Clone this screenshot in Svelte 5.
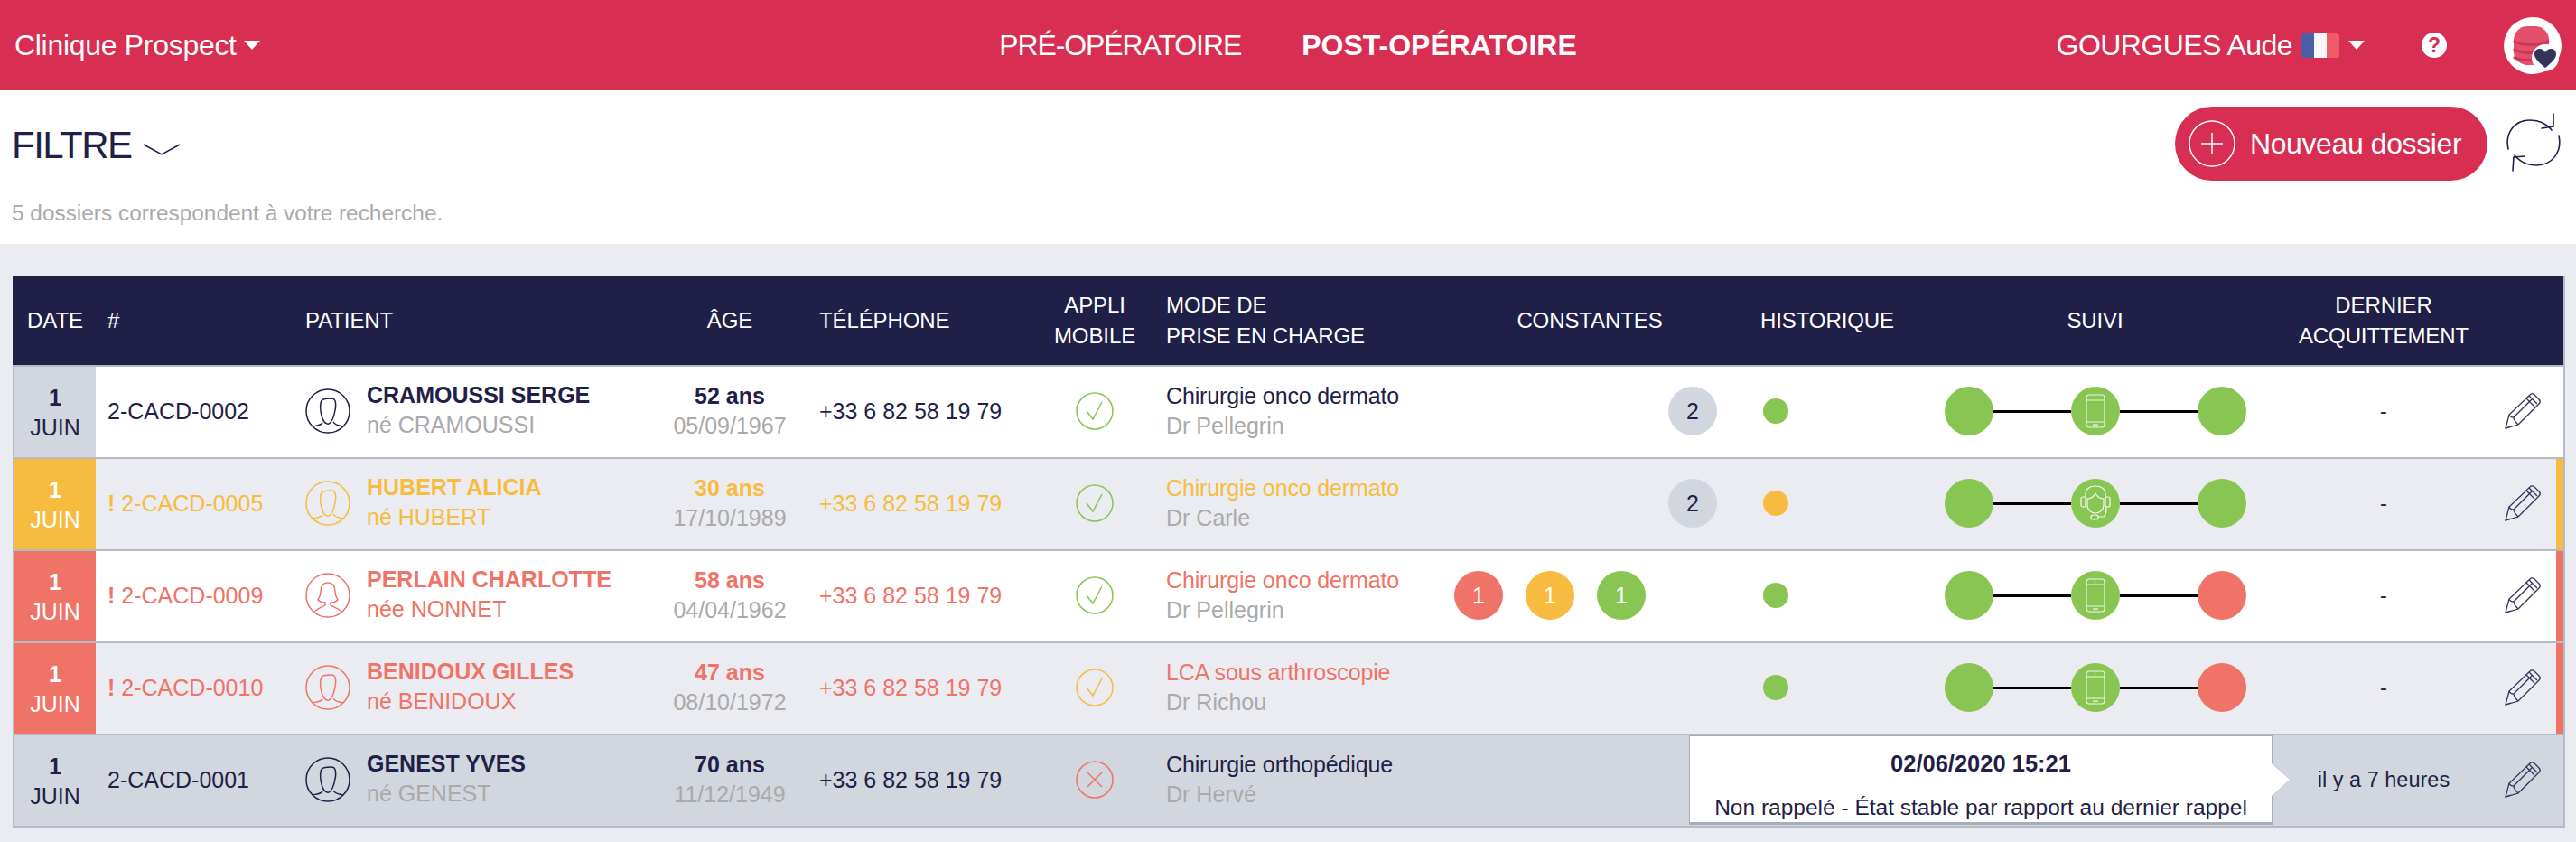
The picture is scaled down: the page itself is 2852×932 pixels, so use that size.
<script>
	const rows = [
		{ day: '1', num: '2-CACD-0002', name: 'CRAMOUSSI SERGE', birth: 'né CRAMOUSSI', age: '52 ans', date: '05/09/1967', mode: 'Chirurgie onco dermato', dr: 'Dr Pellegrin', tone: '', bg: 'white', hist: 'green', end: 'green', badges: [null, null, null, { n: 2, c: 'grey' }], app: 'ok', appTone: 'green', via: 'phone', ack: '-' },
		{ day: '1', num: '2-CACD-0005', name: 'HUBERT ALICIA', birth: 'né HUBERT', age: '30 ans', date: '17/10/1989', mode: 'Chirurgie onco dermato', dr: 'Dr Carle', tone: 'yellow', bg: 'soft', hist: 'yellow', end: 'green', badges: [null, null, null, { n: 2, c: 'grey' }], app: 'ok', appTone: 'green', via: 'headset', ack: '-' },
		{ day: '1', num: '2-CACD-0009', name: 'PERLAIN CHARLOTTE', birth: 'née NONNET', age: '58 ans', date: '04/04/1962', mode: 'Chirurgie onco dermato', dr: 'Dr Pellegrin', tone: 'red', bg: 'white', hist: 'green', end: 'red', badges: [{ n: 1, c: 'red' }, { n: 1, c: 'yellow' }, { n: 1, c: 'green' }], app: 'ok', appTone: 'green', via: 'phone', ack: '-', female: true },
		{ day: '1', num: '2-CACD-0010', name: 'BENIDOUX GILLES', birth: 'né BENIDOUX', age: '47 ans', date: '08/10/1972', mode: 'LCA sous arthroscopie', dr: 'Dr Richou', tone: 'red', bg: 'soft', hist: 'green', end: 'red', badges: [], app: 'ok', appTone: 'yellow', via: 'phone', ack: '-' },
		{ day: '1', num: '2-CACD-0001', name: 'GENEST YVES', birth: 'né GENEST', age: '70 ans', date: '11/12/1949', mode: 'Chirurgie orthopédique', dr: 'Dr Hervé', tone: '', bg: 'grey', hist: '', end: '', badges: [], app: 'ko', appTone: 'red', via: '', ack: 'il y a 7 heures', tip: true }
	];
</script>

<div class="page">
	<header class="topbar">
		<div class="clinic">Clinique Prospect <span class="caret"></span></div>
		<nav class="nav">
			<span class="off">PRÉ-OPÉRATOIRE</span>
			<span class="active">POST-OPÉRATOIRE</span>
		</nav>
		<div class="user">
			<span class="who">GOURGUES Aude</span>
			<span class="flag"><i></i><i></i><i></i></span>
			<span class="caret"></span>
			<span class="help">?</span>
			<span class="avatar">
				<svg width="64" height="63" viewBox="0 0 64 63">
					<ellipse cx="32" cy="31.500" rx="32" ry="31.500" fill="#fff" />
					<rect x="11" y="10" width="39" height="43" rx="15" fill="#e4506b" />
					<path d="M11 26c6 6 33 6 39 0M11 35c6 6 33 6 39 0M11 44c6 5 33 5 39 0" fill="none" stroke="#c9385a" stroke-width="3" />
					<circle cx="46" cy="45" r="15" fill="#fff" />
					<path d="M46 56C40 51 34 46 34 41c0-7 9-8 12-2 3-6 12-5 12 2 0 5-6 10-12 15z" fill="#33335d" />
				</svg>
			</span>
		</div>
	</header>

	<section class="toolbar">
		<div class="filter">
			<h1>FILTRE
				<svg width="42" height="13" viewBox="0 0 42 13"><path d="M1 1l20 11L41 1" fill="none" stroke="#1f1f47" stroke-width="1.5" /></svg>
			</h1>
			<p>5 dossiers correspondent à votre recherche.</p>
		</div>
		<div class="actions">
			<button class="add">
				<svg width="52" height="52" viewBox="0 0 52 52" fill="none" stroke="#fff" stroke-width="1.5"><circle cx="26" cy="26" r="25" /><path d="M26 14v24M14 26h24" /></svg>
				Nouveau dossier
			</button>
			<svg class="refresh" width="62" height="66" viewBox="0 0 62 66" fill="none" stroke="#1f1f47" stroke-width="1.600" stroke-linecap="round">
				<path d="M3 40C-1 22 10 8 27 8c9 0 18 3 24 11" />
				<path d="M53 1v14l-13 2" />
				<path d="M59 25c4 19-8 33-25 33-9 0-17-3-24-11" />
				<path d="M8 64l1-15 12-1" />
			</svg>
		</div>
	</section>

	<section class="table">
		<div class="grid head">
			<div class="c">DATE</div>
			<div class="pl">#</div>
			<div class="pt">PATIENT</div>
			<div class="c">ÂGE</div>
			<div class="ph">TÉLÉPHONE</div>
			<div class="c">APPLI<br />MOBILE</div>
			<div class="mo">MODE DE<br />PRISE EN CHARGE</div>
			<div class="c">CONSTANTES</div>
			<div class="c">HISTORIQUE</div>
			<div class="c">SUIVI</div>
			<div class="c">DERNIER<br />ACQUITTEMENT</div>
			<div></div>
		</div>

		{#each rows as r}
			<div class="grid row {r.bg} {r.tone}">
				<div class="date"><span>{r.day}</span><span>JUIN</span></div>
				<div class="pl num">{#if r.tone}<b>!</b>{/if}{r.num}</div>
				<div class="patient">
					<svg width="50" height="50" viewBox="0 0 50 50" fill="none" stroke="currentColor" stroke-width="1.5">
						<circle cx="25" cy="25" r="24" />
						{#if r.female}
							<path d="M25 11c-6 0-8 5-8 10 0 4-2 7-3 9 3 3 6 3 8 3v3c-3 2-8 3-12 7M25 11c6 0 8 5 8 10 0 4 2 7 3 9-3 3-6 3-8 3v3c3 2 8 3 12 7" />
						{:else}
							<path d="M17 17c0-4 2-5 5-5.500 4-.5 8-1.500 10 .5s2 8 1 12c-1 6-3 13-7 15-4 1-7-4-8-9-1-4-2-9-1-13zM8 42c4-1 9-1 11-4M31 37c2 4 7 4 11 5" />
						{/if}
					</svg>
					<div class="two">
						<strong>{r.name}</strong>
						<span class="birth">{r.birth}</span>
					</div>
				</div>
				<div class="two age">
					<strong>{r.age}</strong>
					<span class="muted">{r.date}</span>
				</div>
				<div class="ph phone">+33 6 82 58 19 79</div>
				<div class="app">
					<svg class={r.appTone} width="42" height="42" viewBox="0 0 42 42" fill="none" stroke="currentColor" stroke-width="1.500">
						<circle cx="21" cy="21" r="20" />
						{#if r.app === 'ok'}
							<path d="M12 21l7 9 10-19" />
						{:else}
							<path d="M13 13l16 16M29 13L13 29" />
						{/if}
					</svg>
				</div>
				<div class="two mo">
					<span class="mode">{r.mode}</span>
					<span class="muted">{r.dr}</span>
				</div>
				<div class="badges">
					{#each r.badges as b}
						{#if b}<span class="badge {b.c}">{b.n}</span>{:else}<span></span>{/if}
					{/each}
				</div>
				<div class="hist">{#if r.hist}<span class="dot {r.hist}"></span>{/if}</div>
				<div class="suivi">
					{#if r.via}
						<span class="step green"></span>
						<span class="line"></span>
						<span class="step green">
							{#if r.via === 'phone'}
								<svg width="22" height="38" viewBox="0 0 22 38" fill="none" stroke="#fff" stroke-opacity=".85" stroke-width="1.200">
									<rect x="1" y="1" width="20" height="36" rx="3" />
									<path d="M1 7h20M1 31h20M8 34.200h6" />
									<path d="M10.500 4h1" />
								</svg>
							{:else}
								<svg width="34" height="40" viewBox="0 0 34 40" fill="none" stroke="#fff" stroke-opacity=".9" stroke-width="1.200">
									<path d="M6 14V10C6 4 11 1 17 1s11 3 11 9v4" />
									<rect x="1" y="13" width="5" height="11" rx="2" />
									<rect x="28" y="13" width="5" height="11" rx="2" />
									<path d="M8 15c3 0 7-2 9-6 2 4 6 6 9 6v7c0 5-4 9-9 9s-9-4-9-9z" />
									<path d="M29 24c0 5 0 9-3 11h-6" />
									<rect x="12" y="33" width="8" height="5" rx="2.500" />
								</svg>
							{/if}
						</span>
						<span class="line"></span>
						<span class="step {r.end}"></span>
					{/if}
				</div>
				<div class="ack">{r.ack}</div>
				<div class="edit">
					<svg width="40" height="40" viewBox="0 0 40 40" fill="none" stroke="#33335d" stroke-width="1.300">
						<path d="M1 39l4-15L28 2c1.500-1.500 3.500-1.500 5 0l5 5c1.500 1.500 1.500 3.500 0 5L15 35z" />
						<path d="M5 24c1 3 3 3 5 3 0 2 1 4 5 8M10 27L30 7M24 6l9 9M27 3l9 9M1 39l6-2" />
					</svg>
				</div>
				{#if r.tone}<span class="flagbar"></span>{/if}
				{#if r.tip}
					<div class="tooltip">
						<strong>02/06/2020 15:21</strong>
						<span>Non rappelé - État stable par rapport au dernier rappel</span>
					</div>
				{/if}
			</div>
		{/each}
	</section>
</div>

<style>
	:global(body) {
		margin: 0;
		background: #ebecf1;
	}

	.page {
		font-family: "Liberation Sans", Arial, sans-serif;
		color: #1f1f47;
		height: 932px;
		overflow: hidden;
	}

	.topbar {
		height: 100px;
		background: #d72e52;
		color: #fff;
		display: grid;
		grid-template-columns: 1fr auto 1fr;
		align-items: center;
		font-size: 32px;
		padding: 0 16px;
	}

	.clinic {
		display: flex;
		align-items: center;
		gap: 8px;
		letter-spacing: -0.3px;
	}

	.caret {
		display: inline-block;
		border-left: 9px solid transparent;
		border-right: 9px solid transparent;
		border-top: 10px solid #fff;
	}

	.nav {
		display: flex;
		gap: 67px;
	}

	.off {
		letter-spacing: -1.1px;
	}

	.active {
		font-weight: 700;
	}

	.user {
		display: flex;
		align-items: center;
		justify-content: flex-end;
	}

	.who {
		letter-spacing: -0.55px;
	}

	.flag {
		display: flex;
		width: 42px;
		height: 27px;
		margin: 0 10px;
		border-radius: 3px;
		overflow: hidden;
	}

	.flag i {
		flex: 1;
		background: #f6f7fb;
	}

	.flag i:first-child {
		background: #4a5fa8;
	}

	.flag i:last-child {
		background: #ef5a67;
	}

	.help {
		width: 28px;
		height: 28px;
		border-radius: 50%;
		background: #fff;
		color: #d72e52;
		font-size: 23px;
		font-weight: 700;
		line-height: 28px;
		text-align: center;
		margin: 0 63px;
	}

	.avatar {
		display: block;
		height: 63px;
	}

	.toolbar {
		height: 170px;
		background: #fff;
		display: flex;
		justify-content: space-between;
		padding: 18px 16px 0 13px;
		box-sizing: border-box;
	}

	h1 {
		margin: 19px 0 0;
		font-size: 42px;
		line-height: 48px;
		font-weight: 400;
		letter-spacing: -1.5px;
		display: flex;
		align-items: center;
		gap: 12px;
	}

	h1 svg {
		margin-top: 8px;
	}

	.filter p {
		margin: 36px 0 0;
		font-size: 24.400px;
		line-height: 30px;
		color: #aaa;
	}

	.actions {
		display: flex;
		align-items: flex-start;
		gap: 20px;
	}

	.add {
		height: 82px;
		width: 346px;
		border: 0;
		border-radius: 41px;
		background: #d72e52;
		color: #fff;
		font: inherit;
		font-size: 32px;
		letter-spacing: -0.4px;
		display: flex;
		align-items: center;
		gap: 16px;
		padding: 0 0 0 15px;
	}

	.refresh {
		margin-top: 7px;
	}

	.table {
		margin: 35px 12px 0 14px;
		border: solid #b5bac9;
		border-width: 0 2px 2px;
	}

	.grid {
		display: grid;
		grid-template-columns: 90px 219px 390px 186px 239px 144px 306px 340px 186px 407px 232px 83px;
		align-items: center;
	}

	.head {
		height: 99px;
		margin: 0 0 0 -2px;
		padding-left: 2px;
		background: #1f1f47;
		color: #fff;
		font-size: 24px;
		line-height: 34px;
		letter-spacing: -0.1px;
	}

	.c {
		text-align: center;
	}

	.pl {
		padding-left: 13px;
	}

	.pt {
		padding-left: 13px;
	}

	.ph {
		padding-left: 6px;
	}

	.mo {
		padding-left: 7px;
	}

	.row {
		position: relative;
		height: 100px;
		border-top: 2px solid #b5bac9;
		font-size: 25px;
		color: var(--tone, #1f1f47);
	}

	.row > div:not(.date):not(.tooltip) {
		padding-bottom: 2px;
	}

	.white {
		background: #fff;
	}

	.soft {
		background: #ebecf1;
	}

	.row.grey {
		background: #d2d6de;
	}

	.row.yellow {
		--tone: #f7bc3f;
	}

	.row.red {
		--tone: #f07367;
	}

	.date {
		height: 100%;
		display: flex;
		flex-direction: column;
		align-items: center;
		justify-content: center;
		gap: 7px;
		background: var(--tone, #d2d6de);
		color: #1f1f47;
		line-height: 26px;
	}

	.yellow .date,
	.red .date {
		color: #fff;
	}

	.row.grey .date {
		background: transparent;
	}

	.date span:first-child {
		font-weight: 700;
	}

	.num b {
		font-weight: 700;
		margin-right: 7px;
	}

	.patient {
		display: flex;
		align-items: center;
		gap: 18px;
		padding-left: 13px;
	}

	.two {
		display: flex;
		flex-direction: column;
		gap: 7px;
		line-height: 26px;
		margin-bottom: 2px;
	}

	.patient .two {
		margin-bottom: 4px;
	}

	.birth {
		color: var(--tone, #aaa);
	}

	.muted {
		color: #aaa;
	}

	.age {
		align-items: center;
	}

	.mode {
		color: var(--tone, #1f1f47);
		letter-spacing: -0.15px;
	}

	.app {
		display: flex;
		justify-content: center;
	}

	.app svg.green {
		color: #89c552;
	}

	.app svg.yellow {
		color: #f7bc3f;
	}

	.app svg.red {
		color: #f07367;
	}

	.badges {
		display: grid;
		grid-template-columns: repeat(4, 54px);
		gap: 25px;
		padding-left: 20px;
	}

	.badge {
		width: 54px;
		height: 54px;
		border-radius: 50%;
		color: #fff;
		text-align: center;
		line-height: 54px;
	}

	.badge.grey {
		background: #d2d6de;
		color: #1f1f47;
	}

	.badge.red,
	.step.red,
	.dot.red {
		background: #f07367;
	}

	.badge.yellow,
	.dot.yellow {
		background: #f7bc3f;
	}

	.badge.green,
	.step.green,
	.dot.green {
		background: #89c552;
	}

	.hist {
		padding-left: 22px;
		display: flex;
	}

	.dot {
		width: 28px;
		height: 28px;
		border-radius: 50%;
	}

	.suivi {
		display: flex;
		justify-content: center;
		align-items: center;
	}

	.step {
		width: 54px;
		height: 54px;
		border-radius: 50%;
		display: flex;
		align-items: center;
		justify-content: center;
	}

	.line {
		width: 86px;
		height: 3px;
		background: #000;
	}

	.ack {
		text-align: center;
		color: #1f1f47;
		font-size: 23.500px;
	}

	.edit {
		display: flex;
		justify-content: center;
		padding-right: 7px;
	}

	.flagbar {
		position: absolute;
		top: 0;
		right: 0;
		bottom: 0;
		width: 8px;
		background: var(--tone);
	}

	.tooltip {
		position: absolute;
		left: 1854px;
		top: 0;
		width: 646px;
		height: 99px;
		box-sizing: border-box;
		background: #fff;
		border: 1px solid #a9adb8;
		border-bottom-width: 3px;
		display: flex;
		flex-direction: column;
		align-items: center;
		gap: 21px;
		padding-top: 16px;
		font-size: 24.500px;
		line-height: 28px;
		color: #1f1f47;
	}

	.tooltip strong {
		font-size: 25.500px;
	}

	.tooltip::after {
		content: "";
		position: absolute;
		left: 100%;
		top: 30px;
		border-left: 20px solid #fff;
		border-top: 18px solid transparent;
		border-bottom: 18px solid transparent;
		filter: drop-shadow(1px 0 0 #c2c5ce);
	}
</style>
